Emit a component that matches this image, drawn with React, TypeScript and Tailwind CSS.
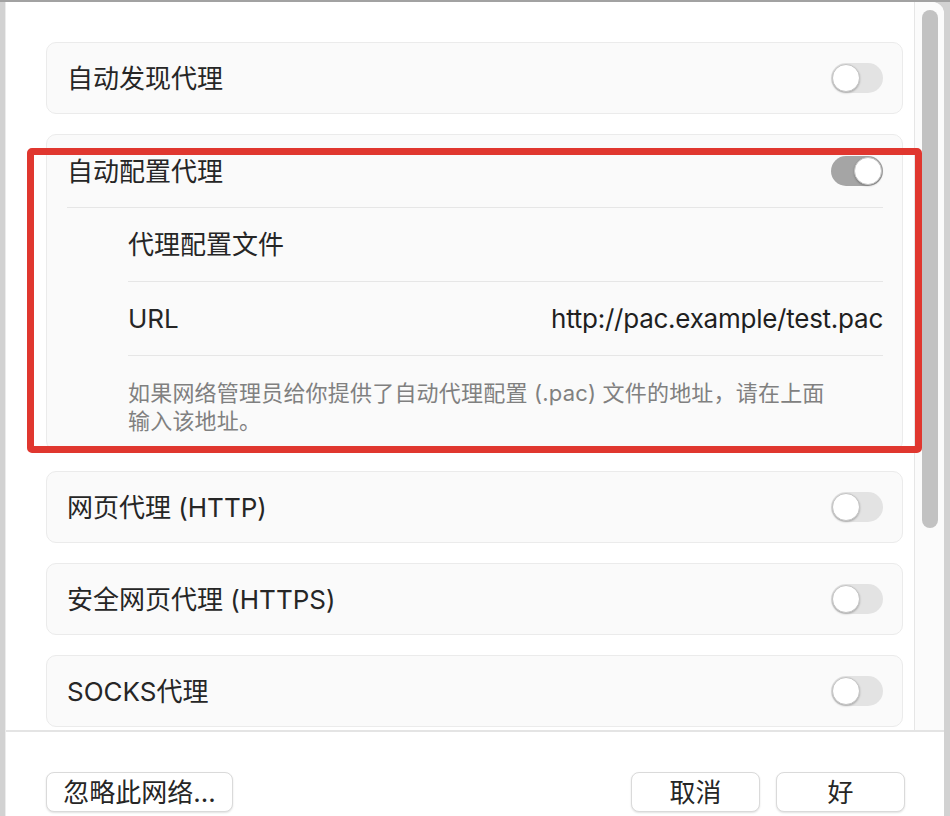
import React from "react";

const Toggle = ({ on = false }: { on?: boolean }) => {
  return (
    <div
      className={
        on
          ? "flex h-[30px] w-[52px] items-center justify-end rounded-full bg-[#a5a5a5] px-[1px]"
          : "flex h-[30px] w-[52px] items-center justify-start rounded-full bg-[#e3e3e3] px-[1px]"
      }
    >
      <div className="h-[28px] w-[28px] rounded-full border border-[#c4c4c4] bg-white shadow-[0_1px_2px_rgba(0,0,0,0.25)]" />
    </div>
  );
};

const Row = ({ title, on = false }: { title: string; on?: boolean }) => {
  return (
    <div className="flex h-[72px] shrink-0 items-center justify-between rounded-[10px] border border-[#ebebeb] bg-[#fafafa] pl-[20px] pr-[19px]">
      <span className="text-[26px] text-[#262626]">{title}</span>
      <Toggle on={on} />
    </div>
  );
};

const FooterButton = ({ label, w }: { label: string; w: string }) => {
  return (
    <button
      className={`flex h-[40px] ${w} items-center justify-center rounded-[8px] border border-[#dadada] bg-white text-[26px] text-[#262626] shadow-[0_1px_2px_rgba(0,0,0,0.12)]`}
    >
      {label}
    </button>
  );
};

export default function App() {
  return (
    <main className="relative flex h-[816px] w-[950px] overflow-hidden border-t-2 border-[#a2a2a2] bg-[#d2d2d2] pl-[5px] pr-[6px] font-['Inter','Noto_Sans_CJK_SC',sans-serif]">
      <div className="flex flex-1 flex-col overflow-hidden rounded-tr-[12px] border-l border-[#ececec] bg-white">
        {/* scroll area */}
        <div className="flex h-[728px] shrink-0 overflow-hidden">
          <div className="flex flex-1 flex-col gap-[20px] pl-[40px] pr-[11px] pt-[40px]">
            <Row title="自动发现代理" />

            {/* expanded auto config card */}
            <div className="flex shrink-0 flex-col rounded-[10px] border border-[#ebebeb] bg-[#fafafa] pl-[20px] pr-[19px]">
              <div className="flex h-[73px] items-center justify-between border-b border-[#e6e6e6]">
                <span className="text-[26px] text-[#262626]">自动配置代理</span>
                <Toggle on />
              </div>
              <div className="pl-[61px]">
                <div className="flex h-[74px] items-center border-b border-[#e6e6e6]">
                  <span className="text-[26px] text-[#262626]">代理配置文件</span>
                </div>
                <div className="flex h-[74px] items-center justify-between border-b border-[#e6e6e6]">
                  <span className="text-[26px] text-[#262626]">URL</span>
                  <span className="text-[26px] tracking-[-0.25px] text-[#1f1f1f]">http://pac.example/test.pac</span>
                </div>
                <p className="pb-[15px] pt-[23px] text-[22px] leading-[28px] tracking-[0.2px] text-[#808080]">
                  如果网络管理员给你提供了自动代理配置 (.pac) 文件的地址，请在上面
                  <br />
                  输入该地址。
                </p>
              </div>
            </div>

            <Row title="网页代理 (HTTP)" />
            <Row title="安全网页代理 (HTTPS)" />
            <Row title="SOCKS代理" />
          </div>

          {/* scrollbar */}
          <div className="w-[30px] shrink-0 border-l border-[#e6e6e6] bg-[#fbfbfb] pl-[7px] pt-[8px]">
            <div className="h-[518px] w-[16px] rounded-full bg-[#c2c2c2]" />
          </div>
        </div>

        {/* footer */}
        <div className="flex flex-1 items-start justify-between border-t-2 border-[#e4e4e4] bg-white pl-[40px] pr-[39px] pt-[40px]">
          <FooterButton label="忽略此网络..." w="w-[187px]" />
          <div className="flex gap-[16px]">
            <FooterButton label="取消" w="w-[129px]" />
            <FooterButton label="好" w="w-[129px]" />
          </div>
        </div>
      </div>

      {/* red highlight annotation */}
      <div className="pointer-events-none absolute left-[27px] top-[146px] h-[305px] w-[895px] rounded-[5px] border-[7px] border-[#e0372f]" />
    </main>
  );
}
